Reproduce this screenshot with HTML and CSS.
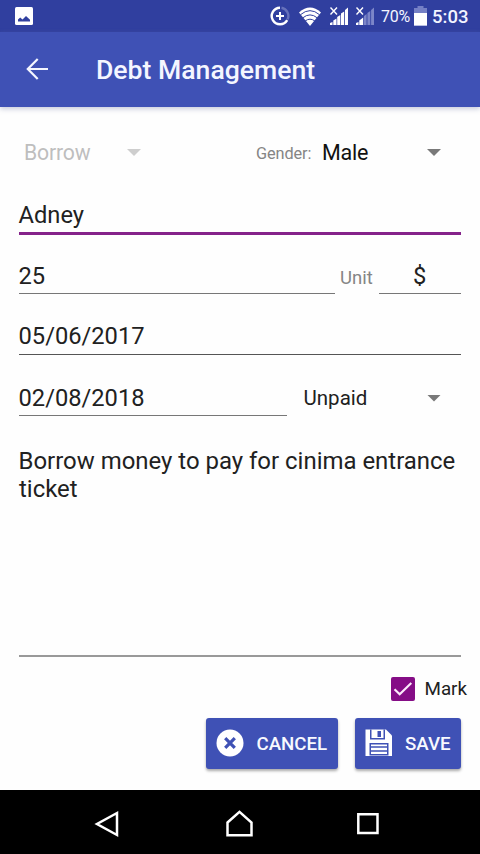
FILE: index.html
```html
<!DOCTYPE html>
<html lang="en">
<head>
<meta charset="utf-8">
<title>Debt Management</title>
<link rel="stylesheet" href="styles.css">
</head>
<body>
<div class="screen">
  <div class="status">
    <svg class="picture" width="18" height="18" viewBox="0 0 18 18"><rect width="18" height="18" rx="1.5" fill="#fff"/><path d="M3 14.5v-2L5.2 10.5 7.5 12.5 11 9 15 12.8v1.7z" fill="#303f9f"/></svg>
    <svg class="saver" width="20" height="20" viewBox="0 0 20 20" fill="none" stroke-width="2.4"><path d="M10 1.7A8.3 8.3 0 1 0 17.2 14.2" stroke="#fff"/><path d="M11.5 1.8A8.3 8.3 0 0 1 17.5 13.6" stroke="#6671ba"/><path d="M10 6v8M6 10h8" stroke="#fff" stroke-width="2"/></svg>
    <svg class="wifi" width="24" height="20" viewBox="0 0 24 20"><path d="M1 6.5Q12-3.5 23 6.5L12 20z" fill="#fff"/><path d="M2.5 8.7Q12 .6 21.5 8.7M4.7 11.9Q12 5.9 19.3 11.9M7.1 15Q12 11.4 16.9 15" fill="none" stroke="#303f9f" stroke-width="1"/></svg>
    <svg class="signal" width="20" height="20" viewBox="0 0 20 20"><path d="M1 19v-2l2.5-1v3zM4.3 19v-4.5l3.2-2V19zM8.2 19v-8l3.1-2V19zM12 19V7.5l3.2-2V19zM16 19V4l3-2.5V19z" fill="#fff"/><path d="M1.5 1.5l6.5 7M8 1.5l-6.5 7" stroke="#fff" stroke-width="1.4"/></svg>
    <svg class="signal second" width="20" height="20" viewBox="0 0 20 20"><path d="M1 19v-2l2.5-1v3zM4.3 19v-4.5l3.9-3V19z" fill="#fff"/><path d="M9 19v-9l2.6-2V19zM12.4 19V7l2.9-2V19zM16.1 19V4L19 1.5V19z" fill="#7c86c8"/><path d="M1.5 1.5l6.5 7M8 1.5l-6.5 7" stroke="#fff" stroke-width="1.4"/></svg>
    <span class="percent">70%</span>
    <svg class="battery" width="13" height="20" viewBox="0 0 13 20"><path d="M3.5 0h6v2H13v18H0V2h3.5z" fill="#7580c5"/><path d="M0 7h13v12.5H0z" fill="#fff"/></svg>
    <span class="clock">5:03</span>
  </div>
  <header class="toolbar">
    <svg width="24" height="24" viewBox="0 0 24 24" fill="none" stroke="#f4f6ff" stroke-width="2.2"><path d="M23 12H3M12.7 2 2.8 12l9.9 10"/></svg>
    <h1>Debt Management</h1>
  </header>
  <main class="form">
    <div class="row types">
      <span class="disabled">Borrow</span><i class="arrow faded"></i>
      <span class="gender">Gender:</span><span class="male">Male</span><i class="arrow last"></i>
    </div>
    <div class="field focused"><span class="name">Adney</span></div>
    <div class="row amount">
      <div class="field value"><span>25</span></div>
      <span class="unit">Unit</span>
      <div class="field currency"><span>$</span></div>
    </div>
    <div class="field start"><span>05/06/2017</span></div>
    <div class="row due">
      <div class="field date"><span>02/08/2018</span></div>
      <span class="state">Unpaid</span><i class="arrow last"></i>
    </div>
    <div class="notes">Borrow money to pay for cinima entrance<br>ticket</div>
    <div class="mark">
      <svg width="24" height="24" viewBox="0 0 24 24"><rect width="24" height="24" rx="2" fill="#850d86"/><path d="m3.5 12.2 5.2 5L20.3 6" fill="none" stroke="#fbeafa" stroke-width="2.2"/></svg>
      <span>Mark</span>
    </div>
    <div class="actions">
      <div class="button cancel">
        <svg width="28" height="28" viewBox="0 0 28 28"><circle cx="14" cy="14" r="13.5" fill="#fff"/><path d="m9.2 9.2 9.6 9.6m0-9.6-9.6 9.6" stroke="#3f51b5" stroke-width="3.2"/></svg>
        <span>CANCEL</span>
      </div>
      <div class="button save">
        <svg width="28" height="28" viewBox="0 0 28 28"><path d="M.5.5H21l6 6V27H.5z" fill="#fff"/><path d="M5 .5h1.5v9H5zM18.5.5H20v9h-1.5zM5 9h15v1.5H5zM12.5 2H16v6h-3.5zM4.5 14h19v12.5h-19z" fill="#3f51b5"/><path d="M6 15.5h16V25H6z" fill="#fff"/><path d="M6 18h16M6 22h16" stroke="#3f51b5" stroke-width="1.5"/></svg>
        <span>SAVE</span>
      </div>
    </div>
  </main>
  <nav class="nav">
    <svg width="26" height="28" viewBox="0 0 26 28"><path d="M23 3v22L3 14z"/></svg>
    <svg class="home" width="28" height="28" viewBox="0 0 28 28"><path d="M2 12.5 14 1.8l12 10.7v12.7H2z"/></svg>
    <svg width="24" height="24" viewBox="0 0 24 24"><path d="M2.3 2.3h19.2v18.8H2.3z"/></svg>
  </nav>
</div>
</body>
</html>
```
FILE: styles.css
```css
* { box-sizing: border-box; }
body { margin: 0; font-family: Roboto, "Liberation Sans", sans-serif; color: #212121; background: #fefefe; }
svg { display: block; flex: none; }
span { white-space: nowrap; }
.screen { width: 480px; height: 854px; display: flex; flex-direction: column; overflow: hidden; }
.status { height: 32px; flex: none; background: #303f9f; color: #f3f5ff; display: flex; align-items: center; padding-left: 15px; }
.saver { margin-left: 237px; }
.wifi { margin-left: 8px; }
.signal { margin-left: 7px; }
.second { margin-left: 6px; }
.percent { font-size: 16px; line-height: 20px; margin-left: 6px; width: 29px; padding-top: 2px; letter-spacing: -.3px; }
.battery { margin-left: 4px; }
.clock { font-size: 18.5px; font-weight: 500; line-height: 20px; margin-left: 5px; padding-top: 2px; }
.toolbar { height: 74.5px; flex: none; background: #3f51b5; display: flex; align-items: center; padding-left: 25px; box-shadow: 0 2px 5px #777fa766; }
h1 { margin: 2px 0 0 47px; font-size: 26.6px; line-height: 32px; font-weight: 500; color: #f4f6ff; white-space: nowrap; }
.form { flex: 1; padding: 25px 19px 0; display: flex; flex-direction: column; }
.row { display: flex; }
.types { height: 42px; align-items: center; padding-left: 5px; }
.types span { line-height: 30px; padding-top: 1px; }
.disabled { width: 103px; font-size: 21.2px; letter-spacing: -.15px; color: #bebebe; }
.arrow { width: 14px; height: 7px; background: #797979; clip-path: polygon(0 0, 100% 0, 50% 100%); }
.faded { background: #cecece; }
.last { margin-left: auto; margin-right: 20px; }
.types .gender { width: 66px; margin-left: 115px; padding-top: 3px; font-size: 16.3px; letter-spacing: -.1px; color: #858585; }
.male { font-size: 21.5px; letter-spacing: -.2px; color: #111; }
.field { height: 61px; border-bottom: 1px solid #777; display: flex; align-items: flex-end; font-size: 23.7px; line-height: 28px; padding-bottom: 4px; }
.field span { margin-left: -.5px; }
.focused { border-bottom: 3px solid #85238a; padding-bottom: 3px; }
.amount { height: 59px; align-items: flex-end; }
.value { width: 316px; height: 59px; padding-bottom: 3px; }
.unit { width: 44px; padding-left: 5px; padding-bottom: 5px; font-size: 18.5px; line-height: 22px; color: #858585; }
.currency { width: 82px; height: 59px; padding-bottom: 3px; justify-content: center; }
.start { height: 61px; border-color: #555; }
.due { height: 61px; align-items: center; }
.date { width: 268px; padding-bottom: 3px; }
.state { margin-left: 16.5px; font-size: 20.5px; line-height: 30px; padding-top: 26px; }
.due .last { margin-top: 26px; }
.notes { height: 241px; padding-top: 31px; border-bottom: 2px solid #999; font-size: 23.95px; line-height: 28px; white-space: nowrap; text-indent: -.5px; }
.mark { height: 24px; margin: 20px -6px 0 0; display: flex; align-items: center; justify-content: flex-end; gap: 10px; font-size: 18.8px; line-height: 24px; }
.mark span { padding-top: 1px; }
.actions { margin-top: 17px; display: flex; justify-content: flex-end; gap: 17px; }
.button { height: 51px; display: flex; align-items: center; background: #3f51b5; color: #f8f9ff; border-radius: 3px; box-shadow: 0 2px 3px #0005; font-size: 18.7px; font-weight: 500; padding-left: 10px; }
.button span { padding-top: 1px; }
.cancel { width: 132px; gap: 13px; }
.save { width: 106.5px; gap: 12.5px; }
.nav { height: 64px; flex: none; background: #000; display: flex; align-items: center; padding: 4px 100px 0 94px; justify-content: space-between; }
.home { transform: translateX(1.5px); }
.nav path { fill: none; stroke: #fff; stroke-width: 2.5; }
```
